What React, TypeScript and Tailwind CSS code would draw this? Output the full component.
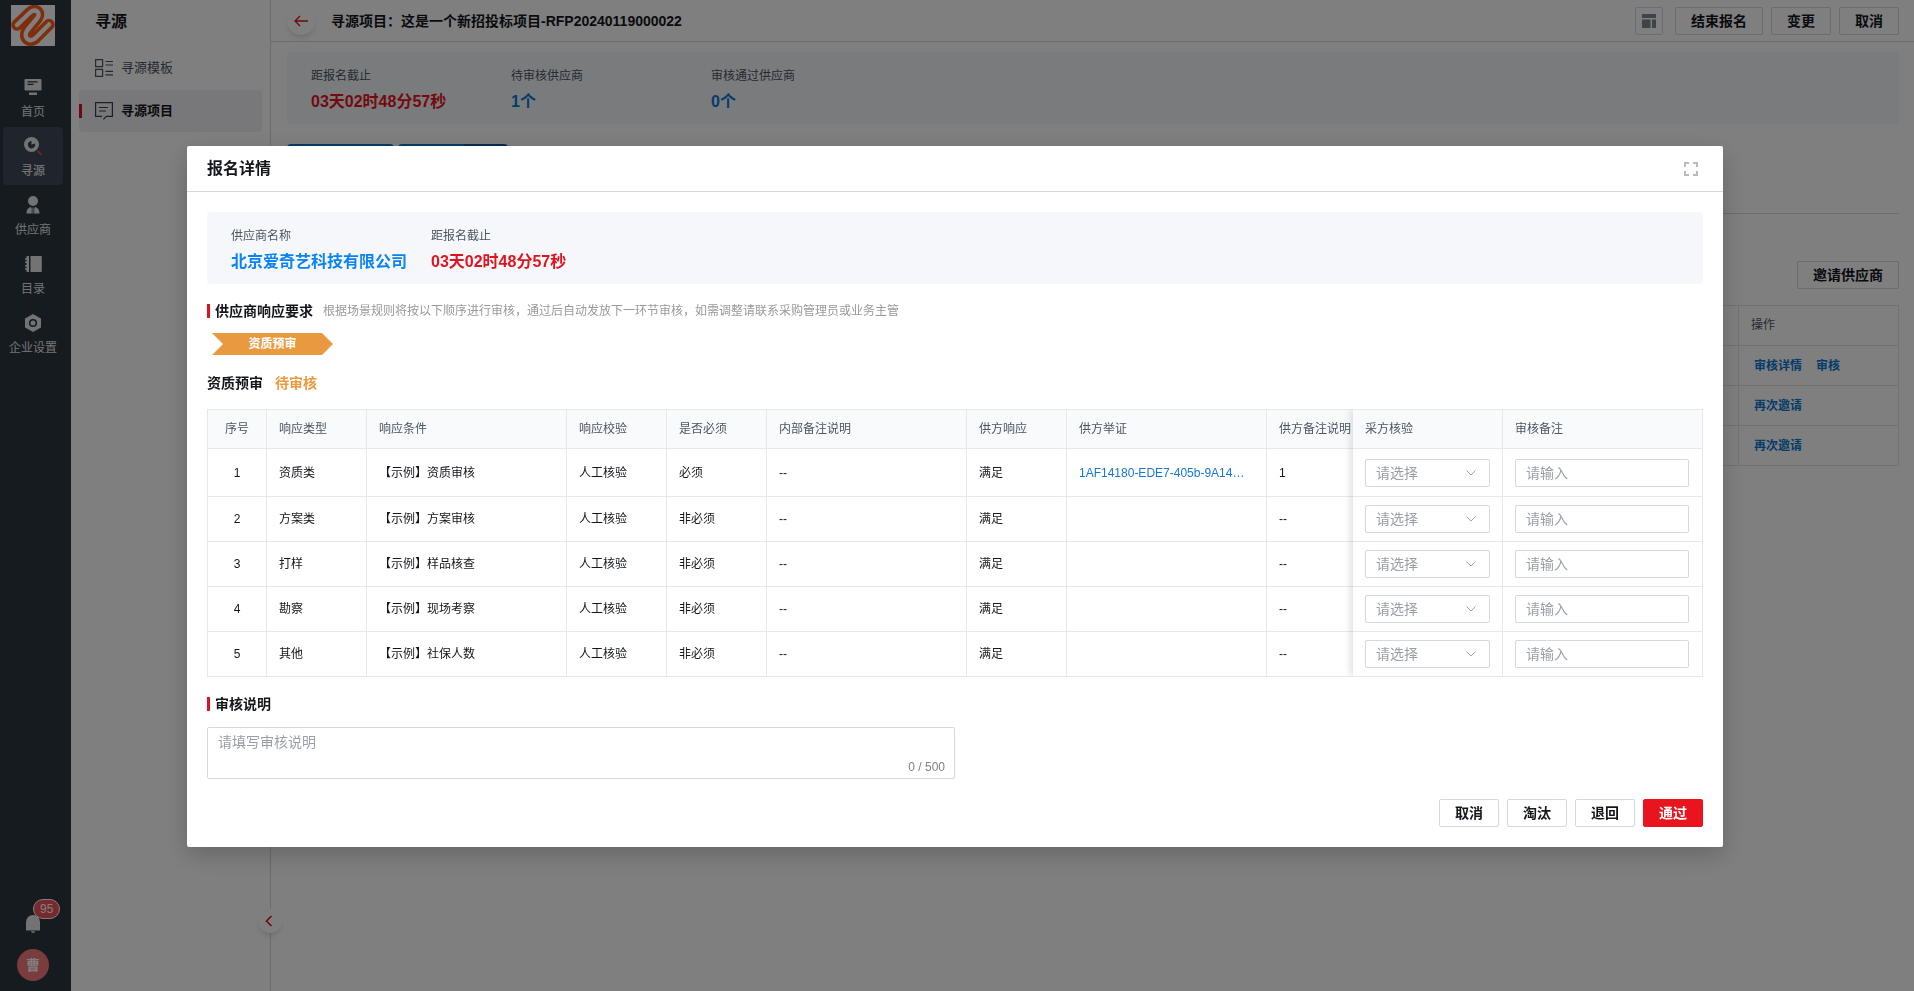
import { ReactNode } from "react";

const font = "font-['Liberation_Sans','Noto_Sans_CJK_SC',sans-serif]";

const navItems = [
  { label: "首页", icon: <HomeIcon /> },
  { label: "寻源", icon: <SourcingIcon />, active: true },
  { label: "供应商", icon: <SupplierIcon /> },
  { label: "目录", icon: <CatalogIcon /> },
  { label: "企业设置", icon: <SettingIcon /> },
];

const projectStats = [
  { label: "距报名截止", value: "03天02时48分57秒", danger: true },
  { label: "待审核供应商", value: "1个" },
  { label: "审核通过供应商", value: "0个" },
];

const rows = [
  { type: "资质类", condition: "【示例】资质审核", required: "必须", proof: "1AF14180-EDE7-405b-9A14…", remark: "1" },
  { type: "方案类", condition: "【示例】方案审核", required: "非必须", proof: "", remark: "--" },
  { type: "打样", condition: "【示例】样品核查", required: "非必须", proof: "", remark: "--" },
  { type: "勘察", condition: "【示例】现场考察", required: "非必须", proof: "", remark: "--" },
  { type: "其他", condition: "【示例】社保人数", required: "非必须", proof: "", remark: "--" },
];

function HomeIcon() {
  return (
    <svg width="18" height="18" viewBox="0 0 18 18">
      <rect x="0.5" y="1" width="17" height="11.5" rx="1" fill="#e6e6e6" />
      <path d="M3.5 3.8h10M3.5 6.4h6" stroke="#2b353a" strokeWidth="1.2" />
      <rect x="5" y="14.5" width="8" height="2.5" fill="#e6e6e6" />
    </svg>
  );
}

function SourcingIcon() {
  return (
    <svg width="18" height="18" viewBox="0 0 18 18">
      <circle cx="7.5" cy="7.5" r="7.5" fill="#e6e6e6" />
      <path d="M7.5 4v3.5l3.5-1A3.7 3.7 0 1 1 7.5 4z" fill="#3d4654" />
      <path d="M13.5 14l4 3.8" stroke="#e8502a" strokeWidth="1.8" />
    </svg>
  );
}

function SupplierIcon() {
  return (
    <svg width="18" height="18" viewBox="0 0 18 18" fill="#e6e6e6">
      <circle cx="9" cy="5" r="5" />
      <path d="M2.5 17.5c0-4 2-6 4.5-6.5l2 5-.5 1.5zM15.5 17.5c0-4-2-6-4.5-6.5l-2 5 .5 1.5z" />
      <path d="M8 11.5h2l.8 5-1.8 1-1.8-1z" fill="#8f9496" />
    </svg>
  );
}

function CatalogIcon() {
  return (
    <svg width="18" height="18" viewBox="0 0 18 18" fill="#e6e6e6">
      <path d="M2.5 1H5v16H2.5zM6.5 1H17a.8.8 0 0 1 .8.8v14.4a.8.8 0 0 1-.8.8H6.5z" />
      <path d="M1 4h3M1 7.3h3M1 10.7h3M1 14h3" stroke="#e6e6e6" strokeWidth="1.4" />
    </svg>
  );
}

function SettingIcon() {
  return (
    <svg width="18" height="18" viewBox="0 0 18 18">
      <path d="M9 0l8 4.5v9L9 18l-8-4.5v-9z" fill="#e6e6e6" />
      <circle cx="9" cy="9" r="3.3" fill="none" stroke="#2b353a" strokeWidth="1.6" />
    </svg>
  );
}

function Logo() {
  const snake = "M6 20L18.5 8C24.5 2 30.5 8 26 13.5L16.5 25C11 32.5 19 39 25 32.5L38 19.5";
  return (
    <svg width="44" height="41" viewBox="0 0 44 41" className="bg-white" fill="none" strokeLinecap="round" strokeLinejoin="round">
      <path d={snake} stroke="#ff5a14" strokeWidth="11.5" />
      <path d={snake} stroke="#fff" strokeWidth="4.5" />
    </svg>
  );
}

function TemplateIcon() {
  return (
    <svg width="18" height="18" viewBox="0 0 18 18" fill="none" stroke="#4b5563" strokeWidth="1.2">
      <path d="M.6.6h7v7h-7zM.6 10.4h7v7h-7zM10.5 2.5H18M10.5 6H18M10.5 12.3H18M10.5 15.8H18" />
    </svg>
  );
}

function ProjectIcon() {
  return (
    <svg width="18" height="18" viewBox="0 0 18 18" fill="none" stroke="#374151" strokeWidth="1.2">
      <path d="M7 14.4H.6V.6h16.8v13.8h-6l-3 3M4 5.5h9M4 9h7" />
    </svg>
  );
}

function BaseButton({ children, primary }: { children: ReactNode; primary?: boolean }) {
  return (
    <button
      className={
        primary
          ? "h-7 rounded-xs border border-[#e8141e] bg-[#e8141e] px-[15px] text-sm leading-5 font-bold text-white"
          : "h-7 rounded-xs border border-[#d5d8e0] bg-white px-[15px] text-sm leading-5 font-bold text-[#14161c]"
      }
    >
      {children}
    </button>
  );
}

function SectionTitle({ children }: { children: ReactNode }) {
  return (
    <h3 className="flex items-center gap-[5px] text-sm leading-5 font-bold text-[#14161c]">
      <span className="h-3.5 w-[3px] bg-[#d9141e]" />
      {children}
    </h3>
  );
}

function Sidebar() {
  return (
    <nav className="flex w-[71px] shrink-0 flex-col items-center bg-[#2a363c] pt-[5px] pr-[5px] pb-2.5 text-[#e6e6e6]">
      <Logo />
      <ul className="mt-[22px] flex w-full flex-col gap-px px-[3px]">
        {navItems.map((item) => (
          <li key={item.label}>
            <a
              href="#"
              className={
                item.active
                  ? "flex h-[58px] flex-col items-center gap-2 rounded-sm bg-[#414b5a] pt-2.5 text-xs font-medium whitespace-nowrap"
                  : "flex h-[58px] flex-col items-center gap-2 pt-2.5 text-xs whitespace-nowrap"
              }
            >
              {item.icon}
              {item.label}
            </a>
          </li>
        ))}
      </ul>
      <button className="relative mt-auto" aria-label="消息">
        <svg width="16" height="18" viewBox="0 0 16 18" fill="#e6e6e6">
          <path d="M1 15.5V7a7 7 0 0 1 14 0v8.5zM6 16.3h4a2 1.7 0 0 1-4 0z" />
        </svg>
        <span className="absolute bottom-3.5 left-2 flex h-5 items-center rounded-full border border-white bg-[#f0525a] px-[6px] text-xs text-white">
          95
        </span>
      </button>
      <div className="mt-4 flex size-8 items-center justify-center rounded-full bg-[#f47878] text-sm font-bold text-white">
        曹
      </div>
    </nav>
  );
}

function SubMenu() {
  return (
    <aside className="relative w-[200px] shrink-0 border-r border-[#d5d8e0] bg-white">
      <h1 className="pt-2.5 pl-6 text-base leading-6 font-bold text-[#14161c]">寻源</h1>
      <div className="mx-2 mt-[13px] flex flex-col gap-px text-[13px]">
        <a href="#" className="flex h-[42px] items-center gap-2 pl-4 text-[#4b5563]">
          <TemplateIcon />
          寻源模板
        </a>
        <a href="#" className="relative flex h-[42px] items-center gap-2 rounded-sm bg-[#f0f1f5] pl-4 font-bold text-[#14161c]">
          <span className="absolute left-0 h-3.5 w-[3px] bg-[#d9141e]" />
          <ProjectIcon />
          寻源项目
        </a>
      </div>
      <button
        aria-label="收起"
        className="absolute -right-3 bottom-[58px] z-10 flex size-6 items-center justify-center rounded-full bg-white pr-0.5 shadow-md"
      >
        <svg width="8" height="12" viewBox="0 0 8 12" fill="none" stroke="#d9141e" strokeWidth="1.6">
          <path d="M6.5 1L1.5 6l5 5" />
        </svg>
      </button>
    </aside>
  );
}

function ProjectPage() {
  return (
    <main className="min-w-0 flex-1 bg-white">
      <header className="flex h-[42px] items-center border-b border-[#d5d8e0] pr-[15px] pl-4">
        <button aria-label="返回" className="flex size-7 items-center justify-center rounded-full bg-white shadow-md">
          <svg width="14" height="12" viewBox="0 0 14 12" fill="none" stroke="#d9141e" strokeWidth="1.3">
            <path d="M14 6H1M6 1L1 6l5 5" />
          </svg>
        </button>
        <h2 className="ml-4 text-sm font-bold text-[#14161c]">
          寻源项目：这是一个新招投标项目-RFP20240119000022
        </h2>
        <div className="ml-auto flex gap-2">
          <button aria-label="布局" className="mr-1 flex size-7 items-center justify-center rounded-xs border border-[#d5dde5]">
            <svg width="14" height="14" viewBox="0 0 14 14" fill="#7d8894">
              <path d="M0 0h14v4H0zM0 5.5h8.5V14H0zM10 5.5h4V14h-4z" />
            </svg>
          </button>
          <BaseButton>结束报名</BaseButton>
          <BaseButton>变更</BaseButton>
          <BaseButton>取消</BaseButton>
        </div>
      </header>
      <div className="pt-2.5 pr-[15px] pl-4">
        <dl className="flex h-[72px] items-center rounded-sm bg-[#f5f7fa] pt-1 pl-6">
          {projectStats.map((s) => (
            <div key={s.label} className="w-[200px]">
              <dt className="text-xs leading-5 text-[#4b5563]">{s.label}</dt>
              <dd className={s.danger ? "mt-1 text-base leading-6 font-bold text-[#e8141e]" : "mt-1 text-base leading-6 font-bold text-[#0a78d2]"}>
                {s.value}
              </dd>
            </div>
          ))}
        </dl>
        <div className="mt-5 flex h-[70px] items-start gap-1 border-b border-[#d5d8e0]">
          <span className="h-8 w-[107px] rounded-sm bg-[#0a78d2]" />
          <span className="h-8 w-[110px] rounded-sm bg-linear-to-r from-[#0a78d2] from-60% to-[#0a5cae] to-60%" />
        </div>
        <div className="mt-[47px] flex justify-end">
          <BaseButton>邀请供应商</BaseButton>
        </div>
        <table className="mt-4 w-full border-collapse text-left text-xs [&_td]:border [&_td]:border-[#e1e4ec] [&_th]:border [&_th]:border-[#e1e4ec]">
          <thead>
            <tr className="h-10">
              <th />
              <th className="w-[160px] px-3 pb-0.5 font-normal text-[#4b5563]">操作</th>
            </tr>
          </thead>
          <tbody className="font-bold text-[#0a78d2]">
            <tr className="h-10">
              <td />
              <td className="px-[15px]">
                <div className="flex gap-3.5">
                  <a href="#">审核详情</a>
                  <a href="#">审核</a>
                </div>
              </td>
            </tr>
            <tr className="h-10">
              <td />
              <td className="px-[15px]"><a href="#">再次邀请</a></td>
            </tr>
            <tr className="h-10">
              <td />
              <td className="px-[15px]"><a href="#">再次邀请</a></td>
            </tr>
          </tbody>
        </table>
      </div>
    </main>
  );
}

function ResponseTable() {
  return (
    <div className="mt-4 flex border-r border-b border-[#e6e8f0]">
      <div className="min-w-0 flex-1 overflow-hidden">
        <table className="w-[1260px] table-fixed border-separate border-spacing-0 text-left text-xs text-[#14161c] [&_td]:border-t [&_td]:border-l [&_td]:border-[#e6e8f0] [&_td]:px-3 [&_th]:border-t [&_th]:border-l [&_th]:border-[#e6e8f0] [&_th]:px-3">
          <colgroup>
            <col className="w-[59px]" />
            <col className="w-[100px]" />
            <col className="w-[200px]" />
            <col className="w-[100px]" />
            <col className="w-[100px]" />
            <col className="w-[200px]" />
            <col className="w-[100px]" />
            <col className="w-[200px]" />
            <col />
          </colgroup>
          <thead className="bg-[#f8fafc] text-[#4b5563] [&_th]:font-normal">
            <tr className="h-[39px]">
              <th className="text-center">序号</th>
              <th>响应类型</th>
              <th>响应条件</th>
              <th>响应校验</th>
              <th>是否必须</th>
              <th>内部备注说明</th>
              <th>供方响应</th>
              <th>供方举证</th>
              <th>供方备注说明</th>
            </tr>
          </thead>
          <tbody>
            {rows.map((row, i) => (
              <tr key={row.type} className="h-[45px] first:h-12">
                <td className="text-center">{i + 1}</td>
                <td>{row.type}</td>
                <td>{row.condition}</td>
                <td>人工核验</td>
                <td>{row.required}</td>
                <td>--</td>
                <td>满足</td>
                <td>{row.proof && <a href="#" className="text-[#1478d2]">{row.proof}</a>}</td>
                <td>{row.remark}</td>
              </tr>
            ))}
          </tbody>
        </table>
      </div>
      <table className="relative w-[349px] shrink-0 table-fixed border-separate border-spacing-0 bg-white text-left text-xs shadow-[-2px_0_8px_rgba(0,0,0,0.14)] [clip-path:inset(0_0_0_-12px)] [&_td]:border-t [&_td]:border-[#e6e8f0] [&_td]:px-3 [&_th]:border-t [&_th]:border-[#e6e8f0] [&_th]:px-3">
        <thead className="bg-[#f8fafc] text-[#4b5563] [&_th]:font-normal">
          <tr className="h-[39px]">
            <th className="w-[149px]">采方核验</th>
            <th className="border-l">审核备注</th>
          </tr>
        </thead>
        <tbody>
          {rows.map((row) => (
            <tr key={row.type} className="h-[45px] first:h-12">
              <td>
                <div className="relative">
                  <select
                    aria-label={`${row.type}采方核验`}
                    className="block h-7 w-full appearance-none rounded-xs border border-[#d5d8e0] bg-white px-2.5 text-sm text-[#9a9ea8]"
                  >
                    <option>请选择</option>
                  </select>
                  <svg width="10" height="6" viewBox="0 0 10 6" fill="none" stroke="#a0a4ad" className="pointer-events-none absolute top-[11px] right-3.5">
                    <path d="M.5.5L5 5 9.5.5" />
                  </svg>
                </div>
              </td>
              <td className="border-l">
                <input
                  aria-label={`${row.type}审核备注`}
                  placeholder="请输入"
                  className="block h-7 w-[174px] rounded-xs border border-[#d5d8e0] px-2.5 text-sm placeholder:text-[#9a9ea8]"
                />
              </td>
            </tr>
          ))}
        </tbody>
      </table>
    </div>
  );
}

function ReviewDialog() {
  return (
    <div className="fixed inset-0 z-20 overflow-auto bg-black/50 pt-[146px] pr-[191px] pl-[187px]">
      <div role="dialog" aria-labelledby="dialog-title" className="rounded-xs bg-white shadow-[0_8px_24px_rgba(0,0,0,0.2)]">
        <div className="flex h-[46px] items-center justify-between border-b border-[#d5d8dc] pr-[25px] pl-5">
          <h2 id="dialog-title" className="text-base leading-6 font-bold text-[#14161c]">报名详情</h2>
          <button aria-label="全屏">
            <svg width="14" height="14" viewBox="0 0 14 14" fill="none" stroke="#b8bbc0" strokeWidth="2">
              <path d="M1 5V1h4M9 1h4v4M13 9v4H9M5 13H1V9" />
            </svg>
          </button>
        </div>
        <div className="px-5 py-5">
          <dl className="flex h-[72px] items-center rounded-sm bg-[#f5f7fa] pt-1 pl-6">
            <div className="w-[200px]">
              <dt className="text-xs leading-5 text-[#4b5563]">供应商名称</dt>
              <dd className="mt-1 text-base leading-6 font-bold text-[#0a84f5]">北京爱奇艺科技有限公司</dd>
            </div>
            <div>
              <dt className="text-xs leading-5 text-[#4b5563]">距报名截止</dt>
              <dd className="mt-1 text-base leading-6 font-bold text-[#e0141e]">03天02时48分57秒</dd>
            </div>
          </dl>
          <div className="mt-[17px] flex items-center gap-2.5">
            <SectionTitle>供应商响应要求</SectionTitle>
            <p className="text-xs leading-5 text-[#999]">
              根据场景规则将按以下顺序进行审核，通过后自动发放下一环节审核，如需调整请联系采购管理员或业务主管
            </p>
          </div>
          <div className="mt-3 ml-[5px] h-[22px] w-[121px] bg-[#e99a40] text-center text-xs leading-[22px] font-bold text-white [clip-path:polygon(0_0,110px_0,100%_50%,110px_100%,0_100%,11px_50%)]">
            资质预审
          </div>
          <div className="mt-[18px] flex gap-3 text-sm leading-5 font-bold">
            <h3 className="text-[#14161c]">资质预审</h3>
            <span className="text-[#e99a40]">待审核</span>
          </div>
          <ResponseTable />
          <div className="mt-[17px]">
            <SectionTitle>审核说明</SectionTitle>
          </div>
          <div className="relative mt-[13px] w-1/2">
            <textarea
              aria-label="审核说明"
              placeholder="请填写审核说明"
              className="block h-[52px] w-full resize-none rounded-xs border border-[#d5d8dc] px-2.5 py-1 text-sm leading-5 placeholder:text-[#9a9ea8]"
            />
            <span className="absolute right-2.5 bottom-1 text-xs text-[#808080]">0 / 500</span>
          </div>
          <div className="mt-5 flex justify-end gap-2">
            <BaseButton>取消</BaseButton>
            <BaseButton>淘汰</BaseButton>
            <BaseButton>退回</BaseButton>
            <BaseButton primary>通过</BaseButton>
          </div>
        </div>
      </div>
    </div>
  );
}

export default function App() {
  return (
    <div className={`${font} flex min-h-screen`}>
      <Sidebar />
      <SubMenu />
      <ProjectPage />
      <ReviewDialog />
    </div>
  );
}
